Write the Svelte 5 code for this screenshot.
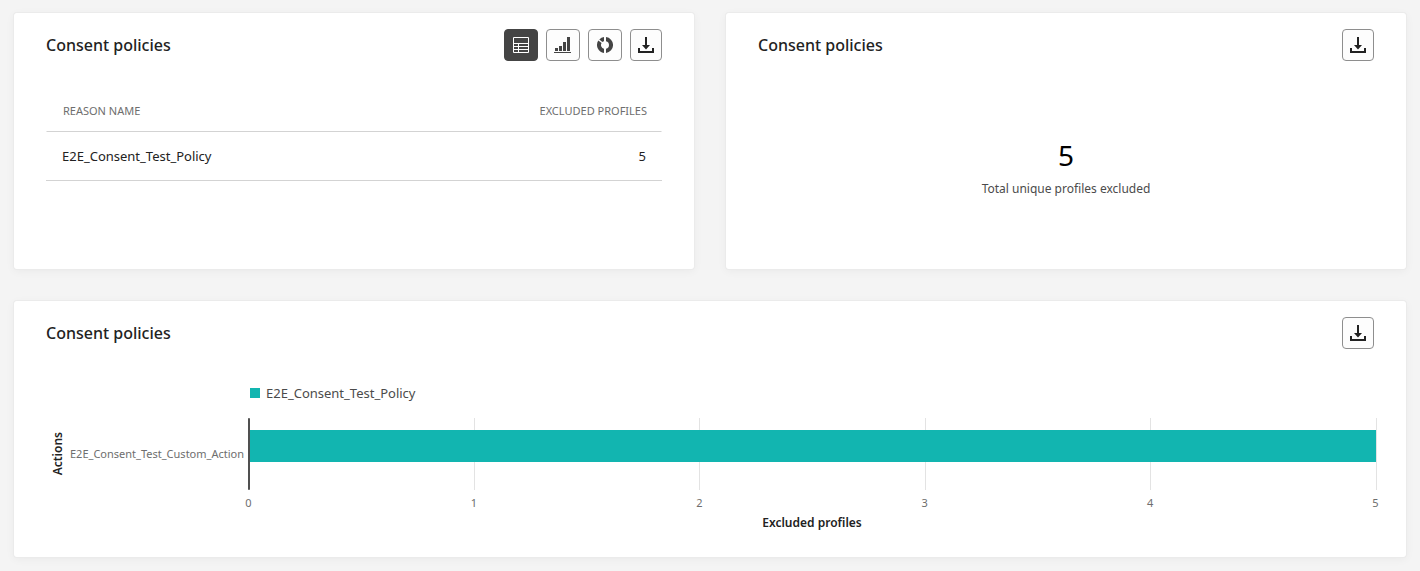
<script>
  const policies = [{ reason: 'E2E_Consent_Test_Policy', excluded: 5 }];
  const ticks = [0, 1, 2, 3, 4, 5];
  const maximum = 5;
  let view = $state('table');
</script>

{#snippet download()}
  <button class="tool" type="button" aria-label="Download">
    <svg width="16" height="16" viewBox="0 0 16 16" fill="#222">
      <path d="M7 0h2v8h3l-4 4.600L4 8h3z" />
      <path d="M0 11h2v3h12v-3h2v5H0z" />
    </svg>
  </button>
{/snippet}

<main>
  <section class="card">
    <header>
      <h2>Consent policies</h2>
      <div class="tools">
        <button class="tool wide" class:selected={view === 'table'} type="button" aria-label="Table" onclick={() => (view = 'table')}>
          <svg width="16" height="16" viewBox="0 0 16 16" fill="none" stroke="currentColor">
            <path d="M.5 .5h15v15H.5zM0 6.500h16M0 9.500h16M0 12.500h16M5.500 6v10" />
          </svg>
        </button>
        <button class="tool wide" class:selected={view === 'bar'} type="button" aria-label="Bar chart" onclick={() => (view = 'bar')}>
          <svg width="18" height="16" viewBox="0 0 18 16" fill="currentColor">
            <path d="M0 15h17v1H0zM1 11h3v3H1zM5 9h3v5H5zM9 5h3v9H9zM13 0h3v14h-3z" />
          </svg>
        </button>
        <button class="tool wide" class:selected={view === 'donut'} type="button" aria-label="Donut chart" onclick={() => (view = 'donut')}>
          <svg width="16" height="16" viewBox="0 0 16 16" fill="currentColor">
            <path d="M9 .06a8 8 0 0 1 0 15.880v-4.070a4 4 0 0 0 0-7.740z" />
            <path d="M7 15.940A8 8 0 0 1 1.300 3.600l3.300 2.300A4 4 0 0 0 7 11.870z" />
            <path d="M2.300 2.400A8 8 0 0 1 7 .06v4.070a4 4 0 0 0-1.600.9z" />
          </svg>
        </button>
        {@render download()}
      </div>
    </header>
    <table>
      <thead>
        <tr><th scope="col">REASON NAME</th><th scope="col">EXCLUDED PROFILES</th></tr>
      </thead>
      <tbody>
        {#each policies as policy}
          <tr><td>{policy.reason}</td><td>{policy.excluded}</td></tr>
        {/each}
      </tbody>
    </table>
  </section>

  <section class="card">
    <header>
      <h2>Consent policies</h2>
      {@render download()}
    </header>
    <div class="total">
      <strong>5</strong>
      <span>Total unique profiles excluded</span>
    </div>
  </section>

  <section class="card full">
    <header>
      <h2>Consent policies</h2>
      {@render download()}
    </header>
    <div class="chart">
      <div class="legend"><i></i>{policies[0].reason}</div>
      <div class="y-title"><span>Actions</span></div>
      <div class="category">E2E_Consent_Test_Custom_Action</div>
      <div class="plot">
        <div class="grid">
          {#each ticks as tick}<i></i>{/each}
        </div>
        <div class="bar" style="width: {(policies[0].excluded / maximum) * 100}%"></div>
        <div class="axis"></div>
      </div>
      <div class="ticks">
        {#each ticks as tick}<span>{tick}</span>{/each}
      </div>
      <div class="x-title">Excluded profiles</div>
    </div>
  </section>
</main>

<style>
  :global(body) {
    margin: 0;
    background: #f4f4f4;
  }
  main {
    display: grid;
    grid-template-columns: 1fr 1fr;
    gap: 32px;
    padding: 13px 14px;
    font-family: "Noto Sans", "Open Sans", sans-serif;
    font-size: 13px;
    line-height: 18px;
    color: #222;
  }
  .card {
    box-sizing: border-box;
    min-height: 256px;
    padding: 16px 32px;
    border-radius: 3px;
    background: #fff;
    box-shadow: 0 0 0 1px #ebebeb, 0 2px 10px rgba(0, 0, 0, 0.05);
  }
  .full {
    grid-column: 1 / -1;
    padding-right: 30px;
  }
  header {
    display: flex;
    align-items: center;
    justify-content: space-between;
    height: 32px;
  }
  .full header {
    margin-right: 2px;
  }
  h2 {
    margin: 0;
    font-size: 16px;
    font-weight: 500;
    line-height: 24px;
  }
  .tools {
    display: flex;
    gap: 8px;
  }
  .tool {
    display: flex;
    align-items: center;
    justify-content: center;
    box-sizing: border-box;
    width: 32px;
    height: 32px;
    padding: 0;
    border: 1px solid #8e8e8e;
    border-radius: 4px;
    background: #fdfdfd;
    color: #444;
  }
  .wide {
    width: 34px;
  }
  .selected {
    border-color: #444;
    background: #444;
    color: #fff;
  }
  table {
    width: 100%;
    margin-top: 28px;
    border-spacing: 0;
  }
  th {
    height: 41px;
    padding: 1px 14px 0 16px;
    border-bottom: 1px solid #d3d3d3;
    font-size: 11px;
    font-weight: 400;
    color: #6e6e6e;
    text-align: left;
  }
  th:first-child {
    border-left: 1px solid transparent;
  }
  th:last-child {
    border-right: 1px solid transparent;
  }
  td {
    height: 48px;
    padding: 0 16px;
    border-bottom: 1px solid #d3d3d3;
  }
  th:last-child,
  td:last-child {
    text-align: right;
  }
  .total {
    display: flex;
    flex-direction: column;
    align-items: center;
    gap: 7px;
    padding-top: 76px;
    font-size: 12px;
    color: #4b4b4b;
  }
  strong {
    font-size: 28px;
    font-weight: 400;
    line-height: 36px;
    color: #000;
  }
  .chart {
    display: grid;
    grid-template-columns: 24px 178px 1fr;
    padding-top: 35px;
  }
  .legend {
    grid-column: 3;
    display: flex;
    align-items: center;
    gap: 6px;
    padding: 0 2px 16px;
    color: #4b4b4b;
  }
  .legend i {
    width: 10px;
    height: 10px;
    background: #12b5b0;
  }
  .y-title {
    display: flex;
    align-items: center;
    justify-content: center;
    font-size: 12px;
    font-weight: 600;
  }
  .y-title span {
    writing-mode: vertical-rl;
    transform: rotate(180deg);
  }
  .category {
    align-self: center;
    padding-right: 4px;
    font-size: 11px;
    color: #6e6e6e;
    text-align: right;
  }
  .plot {
    display: grid;
    height: 72px;
  }
  .plot > * {
    grid-area: 1 / 1;
  }
  .grid {
    display: flex;
    justify-content: space-between;
    margin-right: -1px;
  }
  .grid i {
    width: 1px;
    background: #e3e3e3;
  }
  .bar {
    height: 32px;
    margin-top: 12px;
    background: #12b5b0;
  }
  .axis {
    width: 2px;
    border-radius: 1px;
    background: #505050;
  }
  .ticks {
    grid-column: 3;
    display: flex;
    justify-content: space-between;
    padding-top: 4px;
    font-size: 11px;
    color: #6e6e6e;
  }
  .ticks span {
    display: flex;
    justify-content: center;
    width: 1px;
  }
  .x-title {
    grid-column: 3;
    padding-top: 2px;
    font-size: 12px;
    font-weight: 600;
    text-align: center;
  }
</style>
